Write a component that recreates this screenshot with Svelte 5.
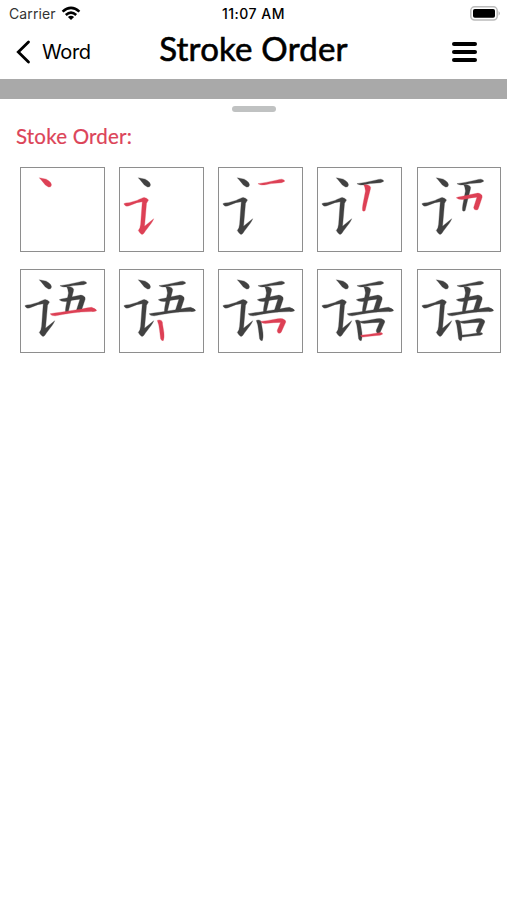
<!-- App.svelte - Stroke order sheet for a single word -->
<script>
  const title = 'Stroke Order';
  const columns = 5;

  // Strokes of the character in writing order, on a 252 x 252 grid
  const strokes = [
    'M56 30 Q66 32 77 34 Q94 43 93 52 Q92 60 84 58 Q74 54 68 44 Q62 37 56 30Z',
    'M12 109 Q16 106 28 106 L52 99 Q68 91 74 90 Q84 92 87 98 L81 108 L76 166 L75 178 L103 155 Q100 162 96 168 L78 192 Q72 203 67 203 Q60 199 56 191 Q62 184 63 172 L68 103 Q52 104 36 112 Q24 118 18 116 Q13 113 12 109Z',
    'M119 48 Q142 45 172 38 Q187 34 192 34 Q202 36 200 41 Q192 46 180 46 Q157 47 142 51 Q129 54 119 48Z',
    'M140 52 Q149 50 157 54 Q163 58 160 65 L151 100 L144 130 Q140 134 136 130 Q135 124 137 112 L145 70 Q144 58 140 52Z',
    'M117 91 Q122 88 132 87 L176 78 Q184 75 190 79 Q198 83 196 89 L186 119 L183 127 Q177 130 172 126 L170 121 L180 89 Q157 91 138 96 Q124 98 117 91Z',
    'M89 134 Q101 131 121 129 L186 119 Q206 115 215 114 Q229 118 231 124 Q228 128 215 127 Q180 127 150 132 Q125 136 105 140 Q93 141 89 134Z',
    'M114 154 Q119 151 126 154 Q131 158 130 166 L134 190 Q136 208 132 216 Q127 217 124 210 L121 185 Q119 165 114 154Z',
    'M127 157 Q147 155 167 151 Q187 147 194 149 Q205 153 204 159 L190 190 Q187 194 182 193 Q177 190 178 184 L188 160 Q165 160 147 163 Q132 165 127 157Z',
    'M130 199 Q152 198 177 193 L192 191 Q198 192 197 196 Q191 200 180 200 Q157 202 137 205 Q131 205 130 199Z'
  ];

  // One frame per stroke, plus a last frame with nothing highlighted
  const frames = Array.from({ length: strokes.length + 1 }, (_, step) => ({
    step,
    visible: strokes.slice(0, step + 1)
  }));
</script>

<div class="screen">
  <!-- Status bar -->
  <div class="status-bar">
    <div class="carrier">
      <span>Carrier</span>
      <svg width="20" height="15" viewBox="0 0 20 15" fill="none" stroke="#000" stroke-width="2.6">
        <path d="M1.6 5.6Q10-2 18.4 5.6" />
        <path d="M4.8 9Q10 4.4 15.2 9" />
        <path d="M10 14L6.9 11Q10 8.6 13.1 11Z" fill="#000" stroke="none" />
      </svg>
    </div>
    <span class="time">11:07 AM</span>
    <svg class="battery" width="31" height="15" viewBox="0 0 31 15">
      <rect x="0.8" y="0.8" width="26.4" height="13.2" rx="3.8" fill="#fff" stroke="#bbb" stroke-width="1.5" />
      <rect x="3" y="3" width="22" height="8.8" rx="1.8" fill="#000" />
      <path d="M28.6 5Q31 7.4 28.6 9.8Z" fill="#aaa" />
    </svg>
  </div>

  <!-- Navigation -->
  <header class="nav-bar">
    <button class="back">
      <svg width="15" height="24" viewBox="0 0 15 24" fill="none">
        <path d="M12.5 2L2.3 12L12.5 22" stroke="#000" stroke-width="2.8" stroke-linecap="round" />
      </svg>
      <span>Word</span>
    </button>
    <h1>{title}</h1>
    <button class="menu" aria-label="Menu">
      <span></span>
      <span></span>
      <span></span>
    </button>
  </header>

  <div class="backdrop"></div>

  <!-- Bottom sheet -->
  <main class="sheet">
    <div class="handle"></div>
    <h2>Stoke Order:</h2>
    <div class="frames" style="--columns: {columns}">
      {#each frames as frame (frame.step)}
        <svg class="frame" viewBox="0 0 252 252">
          {#each frame.visible as d, i}
            <path {d} class:current={i === frame.step} />
          {/each}
        </svg>
      {/each}
    </div>
  </main>
</div>

<style>
  :global(body) {
    margin: 0;
    background: #fff;
  }

  .screen {
    width: 507px;
    height: 900px;
    overflow: hidden;
    background: #fff;
    color: #000;
    font-family: Inter, 'Liberation Sans', sans-serif;
  }

  .status-bar {
    display: grid;
    grid-template-columns: 1fr auto 1fr;
    align-items: center;
    height: 27px;
    box-sizing: border-box;
    padding: 0 6px 0 9px;
    font-size: 14px;
  }

  .carrier {
    display: flex;
    align-items: center;
    gap: 5px;
    color: #333;
    letter-spacing: 0.1px;
  }

  .time {
    margin-right: 3px;
    font-size: 14px;
    font-weight: 500;
    letter-spacing: 0.5px;
  }

  .battery {
    justify-self: end;
  }

  .nav-bar {
    display: grid;
    grid-template-columns: 1fr auto 1fr;
    align-items: center;
    height: 52px;
    box-sizing: border-box;
    padding: 0 16px 2px;
  }

  button {
    padding: 0;
    border: none;
    background: none;
    font-family: inherit;
    color: inherit;
  }

  .back {
    display: flex;
    align-items: center;
    gap: 11px;
    font-size: 20px;
    letter-spacing: -0.4px;
  }

  h1 {
    margin: 0 0 8px;
    font-family: Lato, 'Open Sans', sans-serif;
    font-size: 33px;
    line-height: 40px;
    font-weight: 400;
    letter-spacing: 0.2px;
    -webkit-text-stroke: 0.6px #000;
  }

  .menu {
    display: flex;
    flex-direction: column;
    justify-self: end;
    gap: 4px;
    width: 25px;
    margin-right: 14px;
  }

  .menu span {
    height: 4.3px;
    border-radius: 2px;
    background: #000;
  }

  .backdrop {
    height: 20px;
    background: #a9a9a9;
  }

  .sheet {
    padding: 7px 5px 0 16px;
  }

  .handle {
    width: 44px;
    height: 6px;
    margin-left: 216px;
    border-radius: 3px;
    background: #c0c2c2;
  }

  h2 {
    margin: 12px 0 18px;
    font-family: Lato, 'Open Sans', sans-serif;
    font-size: 20.5px;
    line-height: 25px;
    font-weight: 400;
    letter-spacing: 0.2px;
    color: #dc4458;
    -webkit-text-stroke: 0.2px #dc4458;
  }

  .frames {
    display: grid;
    grid-template-columns: repeat(var(--columns), 84.5px);
    gap: 17px 14.65px;
    margin-left: 4px;
  }

  .frame {
    box-sizing: border-box;
    width: 84.5px;
    height: 84.5px;
    border: 1px solid #8e8e8e;
  }

  .frame path {
    fill: #414141;
    stroke: #414141;
    stroke-width: 1;
    stroke-linejoin: round;
  }

  .frame path.current {
    fill: #dd4055;
    stroke: #dd4055;
  }
</style>
